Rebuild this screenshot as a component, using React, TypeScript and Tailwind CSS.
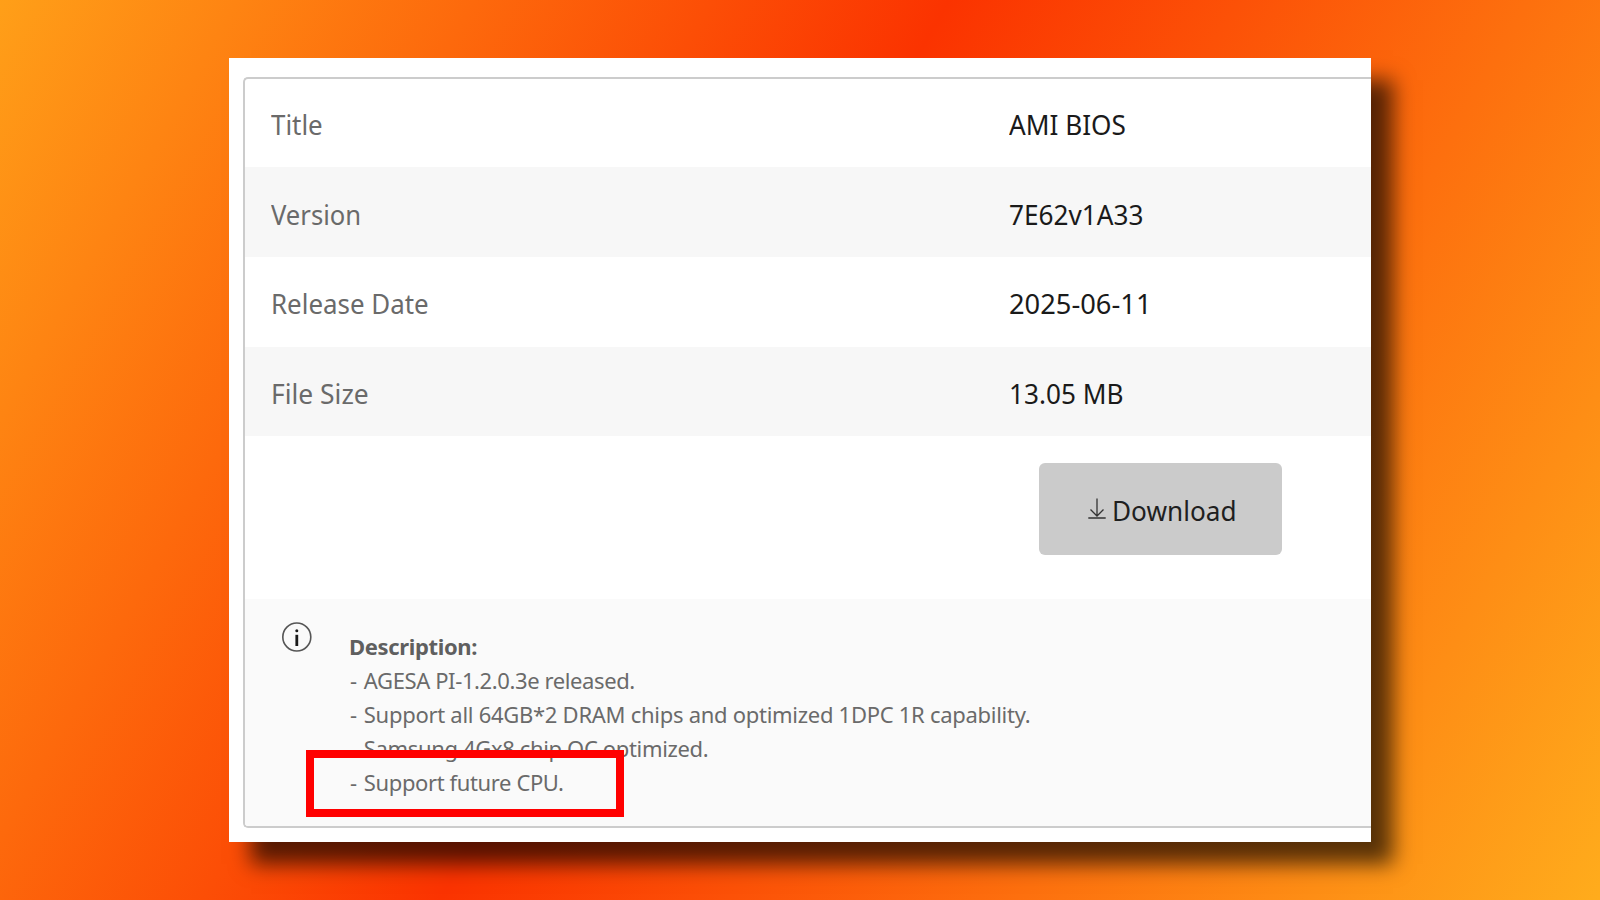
const rows = [
  { label: "Title", value: "AMI BIOS", row: "h-[88px] pt-0.5", labelClass: "scale-x-[0.925]", valueClass: "scale-x-[0.935]" },
  { label: "Version", value: "7E62v1A33", row: "h-[90px] pt-1 bg-[#f7f7f7]", labelClass: "scale-x-[0.915]", valueClass: "scale-x-[0.935]" },
  { label: "Release Date", value: "2025-06-11", row: "h-[90px] pt-0.5", labelClass: "scale-x-[0.925]", valueClass: "scale-x-[0.975]" },
  { label: "File Size", value: "13.05 MB", row: "h-[89px] pt-[3px] bg-[#f7f7f7]", labelClass: "scale-x-[0.943]", valueClass: "scale-x-[0.935]" },
];

const notes = [
  { text: "AGESA PI-1.2.0.3e released.", className: "tracking-[-0.39px]" },
  { text: "Support all 64GB*2 DRAM chips and optimized 1DPC 1R capability.", className: "tracking-[-0.28px]" },
  { text: "Samsung 4Gx8 chip OC optimized.", className: "tracking-[-0.35px]" },
  { text: "Support future CPU.", className: "tracking-[-0.38px]" },
];

function DownloadIcon() {
  return (
    <svg width="18" height="22" viewBox="0 0 18 22" fill="none" stroke="#333333" strokeWidth="1.3">
      <path d="M9 0.5V18M2.5 11.5L9 18L15.5 11.5M0.3 20H17.7" />
    </svg>
  );
}

function InfoIcon() {
  return (
    <svg width="30" height="30" viewBox="0 0 30 30" fill="none">
      <circle cx="14.8" cy="15" r="14" stroke="#555555" strokeWidth="1.6" />
      <circle cx="14.8" cy="8.8" r="1.5" fill="#1a1a1a" />
      <path d="M14.8 12.8V24" stroke="#1a1a1a" strokeWidth="2.8" />
    </svg>
  );
}

export default function App() {
  return (
    <main className="h-[900px] w-[1600px] overflow-hidden bg-[linear-gradient(119.5deg,#ff9f18_0%,#fb3300_45%,#ffac1c_100%)] pt-[58px] pl-[229px] font-['Noto_Sans',sans-serif]">
      <div className="h-[784px] w-[1142px] bg-white pt-[19px] pl-[14px] shadow-[22px_22px_20px_rgba(0,0,0,0.66)]">
        <div className="h-[751px] rounded-l-[5px] border-2 border-r-0 border-[#cccccc]">
          {/* Details */}
          {rows.map((r) => (
            <div key={r.label} className={`flex items-center pl-[26px] text-[28px] whitespace-nowrap ${r.row}`}>
              <div className="w-[738px] text-[#6a6a6a]">
                <span className={`inline-block origin-left ${r.labelClass}`}>{r.label}</span>
              </div>
              <div className="text-[#1a1a1a]">
                <span className={`inline-block origin-left ${r.valueClass}`}>{r.value}</span>
              </div>
            </div>
          ))}

          {/* Download */}
          <div className="flex h-[163px] justify-end pt-[27px] pr-[89px]">
            <button className="flex h-[92px] w-[243px] items-center rounded-md bg-[#cbcbcb] pl-[49px] text-[28px] text-[#1f1f1f]">
              <DownloadIcon />
              <span className="ml-1.5 inline-block origin-left scale-x-[0.935] pt-0.5">Download</span>
            </button>
          </div>

          {/* Description */}
          <div className="flex h-[227px] rounded-bl-[3px] bg-[#fafafa] pt-[23px] pl-[37px]">
            <InfoIcon />
            <div className="ml-[37px] pt-[7px] text-[22px] leading-[34px] whitespace-nowrap text-[#6a6a6a]">
              <div className="font-bold text-[#5f5f5f]">
                <span className="tracking-[-0.35px]">Description:</span>
              </div>
              {notes.map((n, i) => (
                <div key={n.text} className="relative">
                  <span className="mr-px ml-px">- </span>
                  <span className={n.className}>{n.text}</span>
                  {i === notes.length - 1 && (
                    <div className="absolute -top-[15px] -left-[43px] h-[67px] w-[318px] border-8 border-[#ff0000]" />
                  )}
                </div>
              ))}
            </div>
          </div>
        </div>
      </div>
    </main>
  );
}
